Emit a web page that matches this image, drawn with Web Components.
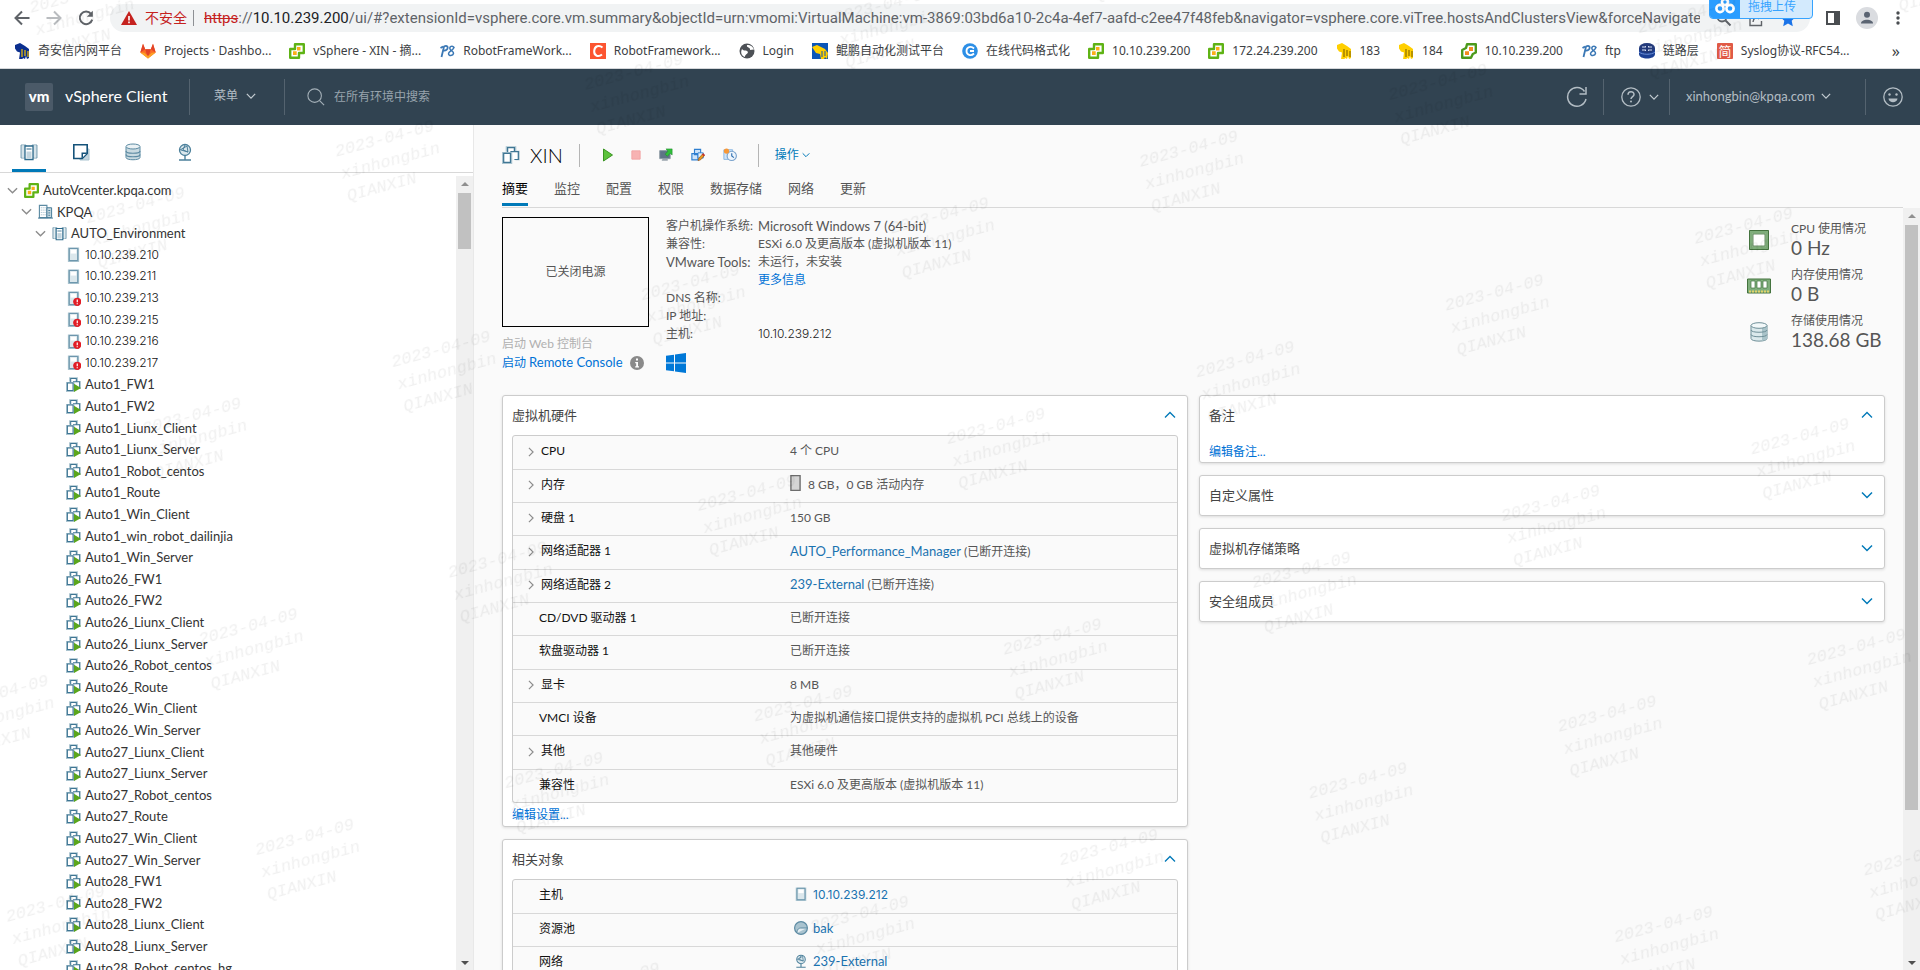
<!DOCTYPE html>
<html lang="zh-CN">
<head>
<meta charset="utf-8">
<title>vSphere - XIN - 摘要</title>
<style>
  html, body { height: 100%; }
  body {
    margin: 0; display: flex; flex-direction: column; overflow: hidden;
    font-family: Lato, "Noto Sans CJK SC", sans-serif; font-size: 12px; line-height: 18px;
    color: #565656; background: #fafafa;
  }
  main { flex: 1; display: flex; min-height: 0; }
</style>
</head>
<body>
<browser-bar></browser-bar>
<vs-header></vs-header>
<main>
  <vs-navigator></vs-navigator>
  <vs-object></vs-object>
</main>
<page-watermark></page-watermark>

<script>
const BASE = `
  *, *::before, *::after { box-sizing: border-box; }
  a { color: #0072d6; text-decoration: none; }
  button { font: inherit; color: inherit; background: none; border: 0; padding: 0; margin: 0; display: inline-flex; align-items: center; }
  ul { list-style: none; margin: 0; padding: 0; }
`;

function define(name, css, html) {
  const template = document.createElement('template');
  customElements.define(name, class extends HTMLElement {
    connectedCallback() {
      if (this.shadowRoot) return;
      template.innerHTML = `<style>${BASE}${css}</style>${typeof html === 'function' ? html(this) : html}`;
      this.attachShadow({ mode: 'open' }).append(template.content.cloneNode(true));
    }
  });
}

/* ---------- icons ---------- */
const VM = `<path d="M4.5 5V1.5h7V5M11 5.5h3.500v6H12" fill="none" stroke="#a9c3cf" stroke-width="2.400"/><path d="M5 6V1.500h6V5M8 10V5h6.500v7H11" fill="#fff" stroke="#3f7694" stroke-width="1.100"/><path d="M1 6.500h7V15H1z" fill="#fff" stroke="#a9c3cf" stroke-width="2.200"/><path d="M1.500 6.500h6v8h-6z" fill="#fff" stroke="#3f7694" stroke-width="1.100"/>`;
const HOST = `<path d="M3 1.500h10v13.500H3z" fill="#dbe7ec" stroke="#a9c3cf" stroke-width="2"/><path d="M3.500 1.500h9v13h-9z" fill="#dbe7ec" stroke="#5d8ba3"/><path d="M5 3h6v4H5z" fill="#fff"/>`;
const VC = `<path d="M6 1.200h8.800v8.800h-4.800v4.800H1.200V6H6z" fill="#fff" stroke="#5fb315" stroke-width="2.400" stroke-linejoin="round"/><path d="M8 4h3.500v3.500H8zM4 8.300h3.700V12H4z" fill="#fbae17"/>`;
const CHESS = (a, b) => `<path d="M1 2l5-2 5 3 4 3v9l-2 1-1-3-1 3-2-1-1 2-3-.5 1-7-3-1-2-3z" fill="${a}"/><path d="M8 6v8M11 7v6M14 8v6" stroke="${b}" stroke-width="1.200" fill="none"/>`;
const GLOBE = `<circle cx="9" cy="7" r="5.500" fill="#dbe7ec" stroke="#4c809b" stroke-width="1.300"/><path d="M4 7l7-4 1 6-7-2M9 2l-2 5 5 2" fill="none" stroke="#4c809b"/><path d="M9 13v3.500M3 17h12" stroke="#4c809b" stroke-width="1.400"/>`;
const CLUSTER = `<path d="M1 2h5v13H1zM12 2h5v13h-5z" fill="#c3d5de" stroke="#7fa3b6"/><path d="M3 2v13M15 2v13" stroke="#e8f0f3"/><path d="M5 3h8v13.500H5z" fill="#fff" stroke="#2f6b8c" stroke-width="1.300"/><path d="M6.500 8.500h5V15h-5z" fill="#c3d5de"/><path d="M6.500 6h5" stroke="#2f6b8c"/>`;
const ICONS = {
  back: ['0 0 16 16', `<path d="M15.500 8H2M8 1.500L1.500 8 8 14.500" fill="none" stroke="#5f6368" stroke-width="2"/>`],
  forward: ['0 0 16 16', `<path d="M.5 8H14M8 1.500L14.500 8 8 14.500" fill="none" stroke="#b9bcbf" stroke-width="2"/>`],
  reload: ['0 0 16 16', `<path d="M13 3.800A6.300 6.300 0 1 0 14.200 9.600" fill="none" stroke="#5f6368" stroke-width="2"/><path d="M14.800 .8v6h-6z" fill="#5f6368"/>`],
  warn: ['0 0 16 14', `<path d="M8 0l8 14H0z" fill="#c5221f"/><path d="M7.200 5h1.600v4.500H7.200zM7.200 10.600h1.600v1.600H7.200z" fill="#fff"/>`],
  search: ['0 0 20 20', `<circle cx="8.500" cy="8.500" r="7.500" fill="none" stroke="#a3afb7" stroke-width="1.200"/><path d="M14 14l5 5" stroke="#a3afb7" stroke-width="1.300"/>`],
  find: ['0 0 16 16', `<circle cx="6" cy="6" r="4.500" fill="none" stroke="#5f6368" stroke-width="1.800"/><path d="M9.500 9.500l5 5" stroke="#5f6368" stroke-width="2"/>`],
  share: ['0 0 16 16', `<path d="M5 3H2v11.500h11.500V10" fill="none" stroke="#5f6368" stroke-width="1.400"/><path d="M5 11c.5-4 3-6 8-6M10 2l3.500 3L10 8" fill="none" stroke="#5f6368" stroke-width="1.400"/>`],
  star: ['0 0 16 16', `<path d="M8 .5l2.300 5 5.400.6-4 3.700 1.100 5.400L8 12.500l-4.800 2.700 1.100-5.400-4-3.700 5.400-.6z" fill="#1a73e8"/>`],
  side: ['0 0 14 14', `<path d="M1 1h12v12H1z" fill="none" stroke="#4a4d51" stroke-width="2"/><path d="M8 1h5v12H8z" fill="#4a4d51"/>`],
  person: ['0 0 22 22', `<circle cx="11" cy="11" r="11" fill="#dadce0"/><circle cx="11" cy="7.800" r="3" fill="#5b6472"/><path d="M5 16.500c0-5 12-5 12 0z" fill="#5b6472"/>`],
  dots: ['0 0 4 14', `<circle cx="2" cy="2" r="1.700" fill="#4a4d51"/><circle cx="2" cy="7" r="1.700" fill="#4a4d51"/><circle cx="2" cy="12" r="1.700" fill="#4a4d51"/>`],
  cloud: ['0 0 20 16', `<g fill="none" stroke="#fff" stroke-width="2.600"><circle cx="10" cy="4" r="3"/><circle cx="5" cy="10.500" r="3.600"/><circle cx="15" cy="10.500" r="3.600"/></g>`],
  qax: ['0 0 16 16', CHESS('#0b2f8f', '#f3c400')],
  yellow: ['0 0 16 16', CHESS('#ffcf00', '#8a6d00')],
  kunpeng: ['0 0 16 16', `<path d="M0 0h16v16H0z" fill="#0b56b8"/><path d="M0 4l5-2 8 4 3 4-1 6-2-2-1 2H9l-1-5-4-1z" fill="#ffcf00"/><path d="M10 8v6M13 8v5" stroke="#0b56b8"/>`],
  gitlab: ['0 0 16 16', `<path d="M8 15.500L.3 9.500 3 .8l2.200 5.400h5.600L13 .8l2.700 8.700z" fill="#fc6d26"/><path d="M8 15.500L5.200 6.200h5.600z" fill="#e24329"/><path d="M.3 9.500L3 .8l2.200 5.400zM15.700 9.500L13 .8l-2.200 5.400z" fill="#e24329"/><path d="M.3 9.500L8 15.500l7.700-6-4 .3L8 13l-3.700-3.200z" fill="#fca326"/>`],
  vc: ['0 0 16 16', VC],
  vcold: ['0 0 16 16', `<path d="M6 1.200h8.800v8.300l-3 1.500-1.800 3.800H1.200V7L5 5z" fill="#fff" stroke="#4c9a1b" stroke-width="2.400" stroke-linejoin="round"/><path d="M8 4h4v4H8zM4 8.300h4V12H4z" fill="#f58a1f"/>`],
  ps: ['0 0 16 16', `<path d="M2.500 14L5 3.500c5-2.500 5 4.500-.5 4M4 3.500L1.500 5" fill="none" stroke="#3b78b5" stroke-width="1.800"/><path d="M15 4.500c-1.500-2.500-5-1-4 1.500s4 2 3.500 4.500-5 2.500-5 .3 4.500-3.300 5.500-6.300z" fill="none" stroke="#3b78b5" stroke-width="1.500"/>`],
  csdn: ['0 0 16 16', `<path d="M0 0h16v16H0z" fill="#fc5531"/><path d="M12.500 4.500C9 1.500 4.500 3 4.200 8s4.300 6.500 7.800 3.500" fill="none" stroke="#fff" stroke-width="2"/>`],
  world: ['0 0 16 16', `<circle cx="8" cy="8" r="7.500" fill="#4d5156"/><path d="M3 6c2 3 4 0 6 3-1 3-3 2-3 5-3-1-5-4-3-8zM8 2c-1 3 4 2 3 5l4-.5C14 4 12 2 8 2z" fill="#fff"/>`],
  cblue: ['0 0 16 16', `<circle cx="8" cy="8" r="7.800" fill="#2d8fe6"/><path d="M12 5.500C9 2.500 4.500 4 4.500 8s4.500 5.500 7.500 2.500M8 8h4" fill="none" stroke="#fff" stroke-width="1.800"/>`],
  link: ['0 0 16 16', `<path d="M0 5h16v6c0 6-16 6-16 0z" fill="#1b3f94"/><ellipse cx="8" cy="5" rx="8" ry="5" fill="#243b7c"/><path d="M3 4h4l-1-1M13 4H9l1-1M3 7h4l-1 1M13 7H9l1 1" stroke="#d7e2f7" fill="none"/><path d="M0 9c3 3 13 3 16 0" stroke="#6f92d8" fill="none"/>`],
  jian: ['0 0 16 16', `<rect width="16" height="16" rx="1" fill="#e05a46"/><text x="8" y="13" font-size="13" text-anchor="middle" fill="#fff">简</text>`],
  refresh: ['0 0 22 22', `<path d="M18.500 5.500A9.300 9.300 0 1 0 20 13" fill="none" stroke="#b3bdc4" stroke-width="1.500"/><path d="M20 1v7h-6.500" fill="none" stroke="#b3bdc4" stroke-width="1.500"/>`],
  help: ['0 0 20 20', `<circle cx="10" cy="10" r="9.200" fill="none" stroke="#b3bdc4" stroke-width="1.300"/><path d="M7 7.800c0-4 6-4 6-.4 0 2.200-3 2.200-3 4.600" fill="none" stroke="#b3bdc4" stroke-width="1.500"/><circle cx="10" cy="14.600" r="1" fill="#b3bdc4"/>`],
  smile: ['0 0 20 20', `<circle cx="10" cy="10" r="9.200" fill="none" stroke="#b3bdc4" stroke-width="1.300"/><circle cx="6.500" cy="7.500" r="1.200" fill="#b3bdc4"/><circle cx="13.500" cy="7.500" r="1.200" fill="#b3bdc4"/><path d="M5.500 11.500h9c-.5 5-8.500 5-9 0z" fill="#b3bdc4"/>`],
  down: ['0 0 12 12', `<path d="M1 3.500l5 5 5-5" fill="none" stroke="currentColor" stroke-width="1.500"/>`],
  up: ['0 0 12 12', `<path d="M1 8.500l5-5 5 5" fill="none" stroke="currentColor" stroke-width="1.300"/>`],
  right: ['0 0 12 12', `<path d="M3.500 1l5 5-5 5" fill="none" stroke="currentColor" stroke-width="1.400"/>`],
  cluster: ['0 0 18 18', CLUSTER],
  vmtab: ['0 0 18 18', `<path d="M13 6h4v11H8v-4" fill="#c3d5de" stroke="#a9c3cf"/><path d="M1.800 1.800h13.400v8.700l-5 5H1.800z" fill="#fff" stroke="#15537a" stroke-width="1.600"/><path d="M9.500 15.500v-6h6z" fill="#15537a"/><path d="M11 11h3l-3 3z" fill="#fff"/>`],
  db: ['0 0 18 18', `<path d="M2 4v10.500c0 3 14 3 14 0V4" fill="#c9dae1" stroke="#5d8ba3"/><path d="M2 8c0 3 14 3 14 0M2 11.500c0 3 14 3 14 0" fill="none" stroke="#5d8ba3" stroke-width="1.200"/><ellipse cx="9" cy="3.500" rx="7" ry="2.500" fill="#eaf1f4" stroke="#5d8ba3"/>`],
  globe: ['0 0 18 18', GLOBE],
  dc: ['0 0 16 16', `<path d="M1.500 1.500h8v13h-8z" fill="#fff" stroke="#5d8ba3" stroke-width="1.200"/><path d="M3 4h5M3 6.500h5M3 9h5M3 11.500h5" stroke="#8fb0c0" stroke-dasharray="1 1"/><path d="M9.500 4h5v10.500h-5z" fill="#c9dae1" stroke="#3f7694"/><path d="M11 7h2M11 9.500h2M11 12h2" stroke="#3f7694"/><path d="M0 15h16" stroke="#3f7694"/>`],
  host: ['0 0 16 16', HOST],
  hosterr: ['0 0 16 16', HOST + `<circle cx="12" cy="11.500" r="4.400" fill="#e11d26"/><path d="M12 9v3M12 13v1.200" stroke="#fff" stroke-width="1.300"/>`],
  vm: ['0 0 16 16', VM],
  vmon: ['0 0 16 16', VM + `<path d="M8.500 7.200v8.800l7.500-4.400z" fill="#5ba61c"/>`],
  play: ['1 0 10 14', `<path d="M1.500 1v12L10.500 7z" fill="#5cc23b" stroke="#3a9422"/>`],
  stop: ['0 0 12 12', `<path d="M1 1h10v10H1z" fill="#f7b3b3" stroke="#f2a0a0"/>`],
  console: ['0 0 16 16', `<path d="M.8 3h12v9.200H.8z" fill="#5e7486" stroke="#8a97a1"/><path d="M4 12.500h6v2H3z" fill="#9aa5ad"/><path d="M8 1h7v7l-2.200-2-3.300 3.500L7 7.200 10.300 3.500z" fill="#2fbf3a" stroke="#1c8a28" stroke-width=".6"/>`],
  edit: ['0 0 16 16', `<path d="M4 1.500h7v6H4zM1 6.500h7v7H1z" fill="#cfe4fa" stroke="#2f7fd0" stroke-width="1.300"/><path d="M8 5.500h6v6H8z" fill="#e6f1fc" stroke="#2f7fd0"/><path d="M8 14.500l1-3 4.500-5 2 2-4.500 5z" fill="#e99a22" stroke="#8a4a12" stroke-width=".7"/><path d="M12.500 7.500l1.500-1.500 2 2-1.500 1.500z" fill="#c9302c"/>`],
  snap: ['0 0 16 16', `<path d="M1 2h10v11H1z" fill="#cfe4fa" stroke="#7fb0e0"/><circle cx="10" cy="9" r="5.300" fill="#eef5fc" stroke="#7aa3cc" stroke-width="1.300"/><path d="M10 6v3l2.500 2" fill="none" stroke="#2f6fb0" stroke-width="1.300"/><circle cx="4" cy="3.500" r="3" fill="#f79838"/>`],
  info: ['0 0 14 14', `<circle cx="7" cy="7" r="7" fill="#8a8a8a"/><path d="M6 2.500h2v2H6zM5.200 6H8v4.200h1v1.300H5.200v-1.300h1V7.200h-1z" fill="#fff"/>`],
  windows: ['0 0 20 20', `<path d="M0 2.800L8 1.700v7.800H0zM9 1.500L20 0v9.500H9zM0 10.500h8v7.800l-8-1.100zM9 10.500h11V20L9 18.500z" fill="#0078d7"/>`],
  cpu: ['0 0 20 20', `<path d="M2 2h16v16H2z" fill="#fff" stroke="#7fae7b" stroke-width="3.400"/><path d="M.5 .5h19v19H.5z" fill="none" stroke="#44733f"/><path d="M4 4h12v12H4z" fill="none" stroke="#44733f" stroke-width=".8"/>`],
  mem: ['0 0 24 16', `<path d="M.5 1h23v14H.5z" fill="#7fae7b" stroke="#44733f"/><path d="M4 3h4v7H4zM10 3h4v7h-4zM16 3h4v7h-4z" fill="#fff" stroke="#44733f" stroke-width=".7"/><path d="M2 13.500h20" stroke="#e3d36b" stroke-width="2" stroke-dasharray="2 1"/>`],
  disk: ['0 0 18 20', `<path d="M1 3.500v13c0 3.500 16 3.500 16 0v-13" fill="#dbe9ec" stroke="#6f8f98"/><path d="M12 5.500l5-1.500v13l-5 2z" fill="#a9c3c9"/><path d="M1 8c0 3 16 3 16 0M1 12.500c0 3 16 3 16 0" fill="none" stroke="#6f8f98"/><ellipse cx="9" cy="3.500" rx="8" ry="2.800" fill="#f2f8f9" stroke="#6f8f98"/>`],
  pool: ['0 0 14 14', `<circle cx="7" cy="7" r="6.400" fill="#a9c3cf" stroke="#5d8ba3" stroke-width="1.200"/><path d="M3 12c0-4 2-5 4-5h6" fill="#e4edf1" stroke="#5d8ba3"/>`],
  ram: ['0 0 12 18', `<path d="M1 1h10v16H1z" fill="#d5d5d5" stroke="#6d6d6d" stroke-width="1.500"/>`],
};
define('vs-icon', `
  :host { display: inline-flex; flex: none; width: 16px; height: 16px; }
  svg { width: 100%; height: 100%; display: block; font-family: "Noto Sans CJK SC", sans-serif; }
`, el => {
  const [box, body] = ICONS[el.getAttribute('name')];
  return `<svg viewBox="${box}" aria-hidden="true">${body}</svg>`;
});

/* ---------- browser chrome ---------- */
define('bookmark-item', `
  :host { display: block; flex: none; }
  a { display: flex; align-items: center; gap: 8px; color: #3c4043; white-space: nowrap; }
`, el => `<a href="#"><vs-icon name="${el.getAttribute('icon')}"></vs-icon><span><slot></slot></span></a>`);

define('browser-bar', `
  :host { display: block; background: #fff; border-bottom: 1px solid #d5d7da; font-family: "Noto Sans", "Noto Sans CJK SC", sans-serif; }
  .tools { display: flex; align-items: center; height: 36px; padding: 0 20px 0 14px; gap: 16px; }
  .omni { flex: 1; display: flex; align-items: center; height: 28px; padding: 0 14px 0 11px; border-radius: 14px; background: #f1f3f4;
    font: 15px/20px Roboto, "Noto Sans CJK SC", sans-serif; color: #5f6368; }
  .omni vs-icon[name=warn] { height: 14px; }
  .risk { color: #c5221f; font-size: 14px; margin-left: 8px; padding-right: 6px; border-right: 1px solid #8d9094; line-height: 16px; margin-right: 10px; white-space: nowrap; }
  s { color: #c5221f; } b { font-weight: 400; color: #202124; }
  input { flex: 1; min-width: 0; border: 0; padding: 0; background: none; font: inherit; color: inherit; outline: 0; }
  .acts { display: flex; gap: 16px; margin-left: 16px; padding-top: 2px; }
  .upload { position: absolute; top: -6px; right: 107px; display: flex; width: 104px; height: 25px; border: 1px solid #36a3ff; border-radius: 4px; overflow: hidden; background: #d3eafd; color: #36a3ff; font-size: 12px; padding: 0; align-items: stretch; text-align: left; }
  .upload i { flex: none; width: 30px; display: flex; align-items: end; justify-content: center; background: #2a9dff; padding-bottom: 4px; }
  .upload span { flex: 1; line-height: 16px; padding: 4px 0 0 8px; }
  .upload vs-icon { width: 20px; }
  vs-icon[name=side] { width: 14px; height: 14px; } vs-icon[name=person] { width: 22px; height: 22px; } vs-icon[name=dots] { width: 4px; height: 14px; margin-left: 2px; }
  .marks { display: flex; align-items: center; gap: 18px; height: 32px; padding: 0 20px 2px 14px; }
  .more { margin-left: auto; font-size: 16px; color: #3c4043; }
`, `
  <div class="tools">
    <button aria-label="后退"><vs-icon name="back"></vs-icon></button>
    <button aria-label="前进"><vs-icon name="forward"></vs-icon></button>
    <button aria-label="重新加载"><vs-icon name="reload"></vs-icon></button>
    <div class="omni">
      <vs-icon name="warn"></vs-icon><span class="risk">不安全</span>
      <s>https</s>://<b>10.10.239.200</b>
      <input aria-label="地址" value="/ui/#?extensionId=vsphere.core.vm.summary&amp;objectId=urn:vmomi:VirtualMachine:vm-3869:03bd6a10-2c4a-4ef7-aafd-c2ee47f48feb&amp;navigator=vsphere.core.viTree.hostsAndClustersView&amp;forceNavigate">
      <div class="acts"><vs-icon name="find"></vs-icon><vs-icon name="share"></vs-icon><vs-icon name="star"></vs-icon></div>
    </div>
    <button aria-label="侧边栏"><vs-icon name="side"></vs-icon></button>
    <button aria-label="用户"><vs-icon name="person"></vs-icon></button>
    <button aria-label="菜单"><vs-icon name="dots"></vs-icon></button>
  </div>
  <nav class="marks">
    <bookmark-item icon="qax">奇安信内网平台</bookmark-item>
    <bookmark-item icon="gitlab">Projects · Dashbo...</bookmark-item>
    <bookmark-item icon="vc">vSphere - XIN - 摘...</bookmark-item>
    <bookmark-item icon="ps">RobotFrameWork...</bookmark-item>
    <bookmark-item icon="csdn">RobotFramework...</bookmark-item>
    <bookmark-item icon="world">Login</bookmark-item>
    <bookmark-item icon="kunpeng">鲲鹏自动化测试平台</bookmark-item>
    <bookmark-item icon="cblue">在线代码格式化</bookmark-item>
    <bookmark-item icon="vc">10.10.239.200</bookmark-item>
    <bookmark-item icon="vc">172.24.239.200</bookmark-item>
    <bookmark-item icon="yellow">183</bookmark-item>
    <bookmark-item icon="yellow">184</bookmark-item>
    <bookmark-item icon="vcold">10.10.239.200</bookmark-item>
    <bookmark-item icon="ps">ftp</bookmark-item>
    <bookmark-item icon="link">链路层</bookmark-item>
    <bookmark-item icon="jian">Syslog协议-RFC54...</bookmark-item>
    <button class="more" aria-label="更多书签">»</button>
  </nav>
  <button class="upload"><i><vs-icon name="cloud"></vs-icon></i><span>拖拽上传</span></button>
`);

/* ---------- product header ---------- */
define('vs-header', `
  :host { display: flex; align-items: center; height: 56px; padding: 0 17px 0 25px; background: #314351; color: #b3bdc4; }
  .logo { width: 28px; height: 28px; border-radius: 2px; background: #4b5a68; color: #fff; font: 900 15px/26px Lato, sans-serif; text-align: center; }
  .name { margin-left: 12px; width: 124px; padding-bottom: 2px; font-size: 16px; color: #fff; white-space: nowrap; }
  .cell { display: flex; align-items: center; height: 36px; border-left: 1px solid #54636f; }
  .menu { width: 95px; padding-left: 24px; padding-bottom: 2px; gap: 8px; }
  .search { flex: 1; padding-left: 22px; gap: 9px; }
  .search vs-icon { width: 18px; height: 20px; }
  input { flex: 1; min-width: 0; border: 0; padding: 0; background: none; outline: 0; font: inherit; color: inherit; }
  input::placeholder { color: #98a4ad; opacity: 1; }
  .down { width: 10px; height: 10px; color: #c3cbd1; }
  .refresh { margin-right: 15px; } .refresh vs-icon { width: 22px; height: 22px; }
  .help { width: 66px; padding-left: 17px; gap: 8px; } .help > vs-icon:first-child, .smile vs-icon { width: 20px; height: 20px; }
  .user { width: 196px; padding-left: 16px; padding-bottom: 2px; gap: 6px; font-size: 13px; }
  .smile { padding-left: 17px; }
`, `
  <div class="logo">vm</div><div class="name">vSphere Client</div>
  <button class="cell menu">菜单 <vs-icon class="down" name="down"></vs-icon></button>
  <label class="cell search"><vs-icon name="search"></vs-icon><input type="search" placeholder="在所有环境中搜索" aria-label="在所有环境中搜索"></label>
  <button class="refresh" aria-label="刷新"><vs-icon name="refresh"></vs-icon></button>
  <button class="cell help" aria-label="帮助"><vs-icon name="help"></vs-icon><vs-icon class="down" name="down"></vs-icon></button>
  <button class="cell user">xinhongbin@kpqa.com <vs-icon class="down" name="down"></vs-icon></button>
  <button class="cell smile" aria-label="反馈"><vs-icon name="smile"></vs-icon></button>
`);

/* ---------- scroll track ---------- */
define('scroll-track', `
  :host { flex: none; width: 17px; display: flex; flex-direction: column; align-items: center; justify-content: space-between; background: #f0f0f0; }
  i { width: 0; border: 4px solid transparent; }
  .up { border-top: 0; border-bottom-color: #8f8f8f; margin: 6px 0; }
  .dn { border-bottom: 0; border-top-color: #505050; margin: 6px 0 5px; }
  .rail { flex: 1; width: 13px; padding-top: 1px; }
  .thumb { background: #c1c1c1; height: var(--thumb, 10%); }
`, `<i class="up"></i><div class="rail"><div class="thumb"></div></div><i class="dn"></i>`);

/* ---------- inventory tree ---------- */
define('tree-node', `
  :host { display: flex; align-items: center; height: 22px; color: #333; font-size: 13px; white-space: nowrap; }
  .sp { flex: none; width: calc(7px + 14px * var(--level)); }
  .tw { flex: none; width: 11px; height: 11px; margin-right: 6px; color: #8c8c8c; }
  .tw vs-icon { width: 11px; height: 11px; }
  .ic { width: 15px; height: 15px; margin-right: 4px; }
  a { color: inherit; }
  :host([mono]) a { font-family: Inter, sans-serif; font-size: 12px; font-weight: 300; color: #111; }
`, el => {
  const open = el.hasAttribute('open');
  return `<style>:host{--level:${el.getAttribute('level')}}</style><span class="sp"></span>` +
    (open ? `<button class="tw" aria-label="折叠"><vs-icon name="down"></vs-icon></button>` : `<span class="tw"></span>`) +
    `<vs-icon class="ic" name="${el.getAttribute('icon')}"></vs-icon><a href="#"><slot></slot></a>`;
});

const hosts = [['210', 'host'], ['211', 'host'], ['213', 'hosterr'], ['215', 'hosterr'], ['216', 'hosterr'], ['217', 'hosterr']];
const std = ['FW1', 'FW2', 'Liunx_Client', 'Liunx_Server', 'Robot_centos', 'Route', 'Win_Client', 'Win_Server'];
const vms = [
  ...std.slice(0, 7).map(n => 'Auto1_' + n), 'Auto1_win_robot_dailinjia', 'Auto1_Win_Server',
  ...std.map(n => 'Auto26_' + n), ...std.slice(2).map(n => 'Auto27_' + n),
  ...std.slice(0, 4).map(n => 'Auto28_' + n), 'Auto28_Robot_centos_hg',
];
define('vs-navigator', `
  :host { flex: none; width: 473px; display: flex; flex-direction: column; background: #fff; border-right: 1px solid #e8e8e8; min-height: 0; }
  .tabs { flex: none; display: flex; gap: 18px; height: 48px; padding-left: 12px; border-bottom: 1px solid #d8d8d8; }
  .tabs button { width: 34px; justify-content: center; border-bottom: 3px solid transparent; padding-top: 9px; }
  .tabs button.on { border-color: #0079b8; }
  .tabs vs-icon { width: 18px; height: 18px; }
  .body { flex: 1; display: flex; min-height: 0; padding-top: 3px; }
  .tree { flex: 1; min-width: 0; overflow: hidden; padding-top: 3px; }
  tree-node:nth-child(5n+2), tree-node:nth-child(5n+4) { height: 21px; }
  scroll-track { --thumb: 56px; }
`, `
  <div class="tabs">
    <button class="on" aria-label="主机和集群"><vs-icon name="cluster"></vs-icon></button>
    <button aria-label="虚拟机和模板"><vs-icon name="vmtab"></vs-icon></button>
    <button aria-label="存储"><vs-icon name="db"></vs-icon></button>
    <button aria-label="网络"><vs-icon name="globe"></vs-icon></button>
  </div>
  <div class="body">
    <div class="tree">
      <tree-node level="0" icon="vc" open>AutoVcenter.kpqa.com</tree-node>
      <tree-node level="1" icon="dc" open>KPQA</tree-node>
      <tree-node level="2" icon="cluster" open>AUTO_Environment</tree-node>
      ${hosts.map(([n, i]) => `<tree-node mono level="3" icon="${i}">10.10.239.${n}</tree-node>`).join('')}
      ${vms.map(n => `<tree-node level="3" icon="vmon">${n}</tree-node>`).join('')}
    </div>
    <scroll-track></scroll-track>
  </div>
`);

/* ---------- portlet card ---------- */
define('vs-card', `
  :host { display: block; background: #fff; border: 1px solid #ccc; border-radius: 3px; box-shadow: 0 1px 3px rgba(0,0,0,.12); padding: 0 9px; }
  header { display: flex; align-items: center; justify-content: space-between; height: 39px; padding: 0 2px 2px 0; }
  h2 { margin: 0; font-size: 13px; font-weight: 400; color: #454545; }
  vs-icon { width: 12px; height: 12px; color: #0079b8; }
`, el => {
  const t = el.getAttribute('heading'), open = el.hasAttribute('open');
  return `<header><h2>${t}</h2><button aria-label="${open ? '折叠' : '展开'}"><vs-icon name="${open ? 'up' : 'down'}"></vs-icon></button></header><slot></slot>`;
});

/* ---------- property grid ---------- */
const TABLE = `
  :host { display: block; border: 1px solid #ccc; border-radius: 3px; background: #fafafa; }
  table { width: 100%; border-collapse: collapse; table-layout: fixed; }
  th, td { height: 33px; padding: 0 0 2px; font-weight: 400; text-align: left; border-bottom: 1px solid #d8d8d8; white-space: nowrap; }
  tr:nth-child(3n+1) > * { height: 34px; }
  tr:first-child > * { height: 33px; }
  tr:last-child > * { border-bottom: 0; }
  th { width: 277px; color: #111; padding-left: 26px; }
  th.x { padding-left: 13px; }
  th button { width: 12px; margin-right: 3px; vertical-align: middle; color: #8c8c8c; }
  th vs-icon { width: 10px; height: 10px; }
  td > vs-icon { vertical-align: middle; margin-right: 4px; }
  a { color: #1a73b0; font-size: 13px; }
`;
const row = (k, v, exp) => `<tr><th scope="row"${exp ? ' class="x"' : ''}>${exp ? '<button aria-label="展开"><vs-icon name="right"></vs-icon></button>' : ''}${k}</th><td>${v}</td></tr>`;
define('hardware-table', TABLE + `vs-icon[name=ram] { width: 11px; height: 18px; margin-right: 7px; margin-top: -4px; }`, `<table>
  ${row('CPU', '4 个 CPU', 1)}
  ${row('内存', '<vs-icon name="ram"></vs-icon>8 GB，0 GB 活动内存', 1)}
  ${row('硬盘 1', '150 GB', 1)}
  ${row('网络适配器 1', '<a href="#">AUTO_Performance_Manager</a> (已断开连接)', 1)}
  ${row('网络适配器 2', '<a href="#">239-External</a> (已断开连接)', 1)}
  ${row('CD/DVD 驱动器 1', '已断开连接')}
  ${row('软盘驱动器 1', '已断开连接')}
  ${row('显卡', '8 MB', 1)}
  ${row('VMCI 设备', '为虚拟机通信接口提供支持的虚拟机 PCI 总线上的设备')}
  ${row('其他', '其他硬件', 1)}
  ${row('兼容性', 'ESXi 6.0 及更高版本 (虚拟机版本 11)')}
</table>`);
define('related-table', TABLE + `td { padding-left: 4px; } td > vs-icon { width: 14px; height: 14px; margin-top: -4px; margin-right: 5px; } .ip { font-family: Inter, sans-serif; font-size: 12px; }`, `<table>
  ${row('主机', '<vs-icon name="host"></vs-icon><a class="ip" href="#">10.10.239.212</a>')}
  ${row('资源池', '<vs-icon name="pool"></vs-icon><a href="#">bak</a>')}
  ${row('网络', '<vs-icon name="globe"></vs-icon><a href="#">239-External</a>')}
</table>`);

/* ---------- usage meter ---------- */
define('usage-meter', `
  :host { display: flex; align-items: center; height: 46px; width: 138px; }
  .ic { width: 24px; display: flex; justify-content: center; margin-right: 20px; }
  .ic vs-icon { width: 20px; height: 20px; } .ic vs-icon[name=mem] { width: 24px; height: 16px; }
  .tx { white-space: nowrap; padding-bottom: 2px; }
  strong { display: block; font-size: 19px; line-height: 20px; font-weight: 400; color: #565656; }
`, el => `<div class="ic"><vs-icon name="${el.getAttribute('icon')}"></vs-icon></div><div class="tx">${el.getAttribute('label')}<strong><slot></slot></strong></div>`);

/* ---------- object view ---------- */
define('vs-object', `
  :host { flex: 1; min-width: 0; display: flex; flex-direction: column; background: #fafafa; }
  .head { display: flex; align-items: center; height: 42px; padding: 18px 0 0 28px; flex: none; }
  .head > vs-icon { width: 18px; height: 18px; }
  h1 { margin: 0 16px 0 10px; font-size: 20px; line-height: 24px; font-weight: 300; color: #000; }
  .tools { display: flex; align-items: center; gap: 18px; height: 23px; padding: 0 21px 0 23px; border: solid #b5b5b5; border-width: 0 1px; }
  .tools vs-icon { width: 14px; height: 14px; }
  .tools vs-icon[name=play], .tools vs-icon[name=stop] { width: 10px; }
  .act { margin-left: 16px; color: #0079b8; gap: 3px; } .act vs-icon { width: 8px; height: 8px; }
  .tabs { display: flex; gap: 26px; flex: none; height: 41px; margin: 0 17px 0 28px; border-bottom: 1px solid #d8d8d8; }
  .tabs a { height: 39px; line-height: 36px; padding-top: 3px; color: #565656; font-size: 13px; }
  .tabs a.on { color: #000; border-bottom: 3px solid #0079b8; }
  .scroll { flex: 1; display: flex; min-height: 0; }
  .content { flex: 1; min-width: 0; overflow: hidden; padding: 9px 18px 0 28px; }
  .summary { display: flex; height: 178px; }
  .shot { width: 147px; height: 110px; border: 1px solid #000; display: flex; align-items: center; justify-content: center; margin-bottom: 8px; }
  .off { color: #b0b0b0; }
  .rc { display: flex; align-items: center; justify-content: space-between; width: 142px; white-space: nowrap; } .rc vs-icon { width: 14px; height: 14px; }
  dl { margin: 0; display: grid; grid-template-columns: 92px auto; grid-auto-rows: 18px; white-space: nowrap; }
  dd { margin: 0; } .lat { font-size: 13px; } .ip { font-family: Inter, sans-serif; font-weight: 300; color: #222; }
  .info { margin-left: 17px; flex: 1; }
  .info > vs-icon { width: 20px; height: 20px; margin-top: 10px; }
  .cols { display: grid; grid-template-columns: 1fr 1fr; gap: 11px; align-items: start; }
  .col { display: grid; gap: 12px; }
  .foot { display: block; line-height: 23px; }
  .note { display: block; height: 27px; line-height: 34px; }
  scroll-track { --thumb: 585px; }
`, `
  <div class="head">
    <vs-icon name="vm"></vs-icon><h1>XIN</h1>
    <div class="tools">
      <button aria-label="打开电源"><vs-icon name="play"></vs-icon></button>
      <button aria-label="关闭电源"><vs-icon name="stop"></vs-icon></button>
      <button aria-label="启动控制台"><vs-icon name="console"></vs-icon></button>
      <button aria-label="编辑设置"><vs-icon name="edit"></vs-icon></button>
      <button aria-label="生成快照"><vs-icon name="snap"></vs-icon></button>
    </div>
    <button class="act">操作 <vs-icon name="down"></vs-icon></button>
  </div>
  <nav class="tabs"><a class="on" href="#">摘要</a><a href="#">监控</a><a href="#">配置</a><a href="#">权限</a><a href="#">数据存储</a><a href="#">网络</a><a href="#">更新</a></nav>
  <div class="scroll">
    <div class="content">
      <section class="summary">
        <div>
          <div class="shot">已关闭电源</div>
          <div class="off">启动 Web 控制台</div>
          <div class="rc"><a href="#">启动 <span class="lat">Remote Console</span></a><vs-icon name="info"></vs-icon></div>
        </div>
        <div class="info">
          <dl>
            <dt>客户机操作系统:</dt><dd class="lat">Microsoft Windows 7 (64-bit)</dd>
            <dt>兼容性:</dt><dd>ESXi 6.0 及更高版本 (虚拟机版本 11)</dd>
            <dt class="lat">VMware Tools:</dt><dd>未运行，未安装</dd>
            <dt></dt><dd><a href="#">更多信息</a></dd>
            <dt>DNS 名称:</dt><dd></dd>
            <dt>IP 地址:</dt><dd></dd>
            <dt>主机:</dt><dd class="ip">10.10.239.212</dd>
          </dl>
          <vs-icon name="windows"></vs-icon>
        </div>
        <div>
          <usage-meter icon="cpu" label="CPU 使用情况">0 Hz</usage-meter>
          <usage-meter icon="mem" label="内存使用情况">0 B</usage-meter>
          <usage-meter icon="disk" label="存储使用情况">138.68 GB</usage-meter>
        </div>
      </section>
      <div class="cols">
        <div class="col">
          <vs-card heading="虚拟机硬件" open><hardware-table></hardware-table><a class="foot" href="#">编辑设置...</a></vs-card>
          <vs-card heading="相关对象" open><related-table></related-table></vs-card>
        </div>
        <div class="col">
          <vs-card heading="备注" open><a class="note" href="#">编辑备注...</a></vs-card>
          <vs-card heading="自定义属性"></vs-card>
          <vs-card heading="虚拟机存储策略"></vs-card>
          <vs-card heading="安全组成员"></vs-card>
        </div>
      </div>
    </div>
    <scroll-track></scroll-track>
  </div>
`);

/* ---------- tiled watermark over the whole window ---------- */
define('page-watermark', `
  :host { position: fixed; inset: 0; pointer-events: none; }
  svg { width: 100%; height: 100%; display: block; }
  text { font: italic 17px "Liberation Mono", monospace; fill: rgba(0,0,0,.06); }
`, `<svg aria-hidden="true"><defs>
  <pattern id="w" width="258" height="218" patternUnits="userSpaceOnUse" patternTransform="translate(1565 754) rotate(-15) translate(-4 -60)">
    <text x="4" y="37">2023-04-09</text><text x="4" y="60">xinhongbin</text><text x="4" y="83">QIANXIN</text>
  </pattern></defs><rect width="100%" height="100%" fill="url(#w)"/></svg>`);
</script>
</body>
</html>
